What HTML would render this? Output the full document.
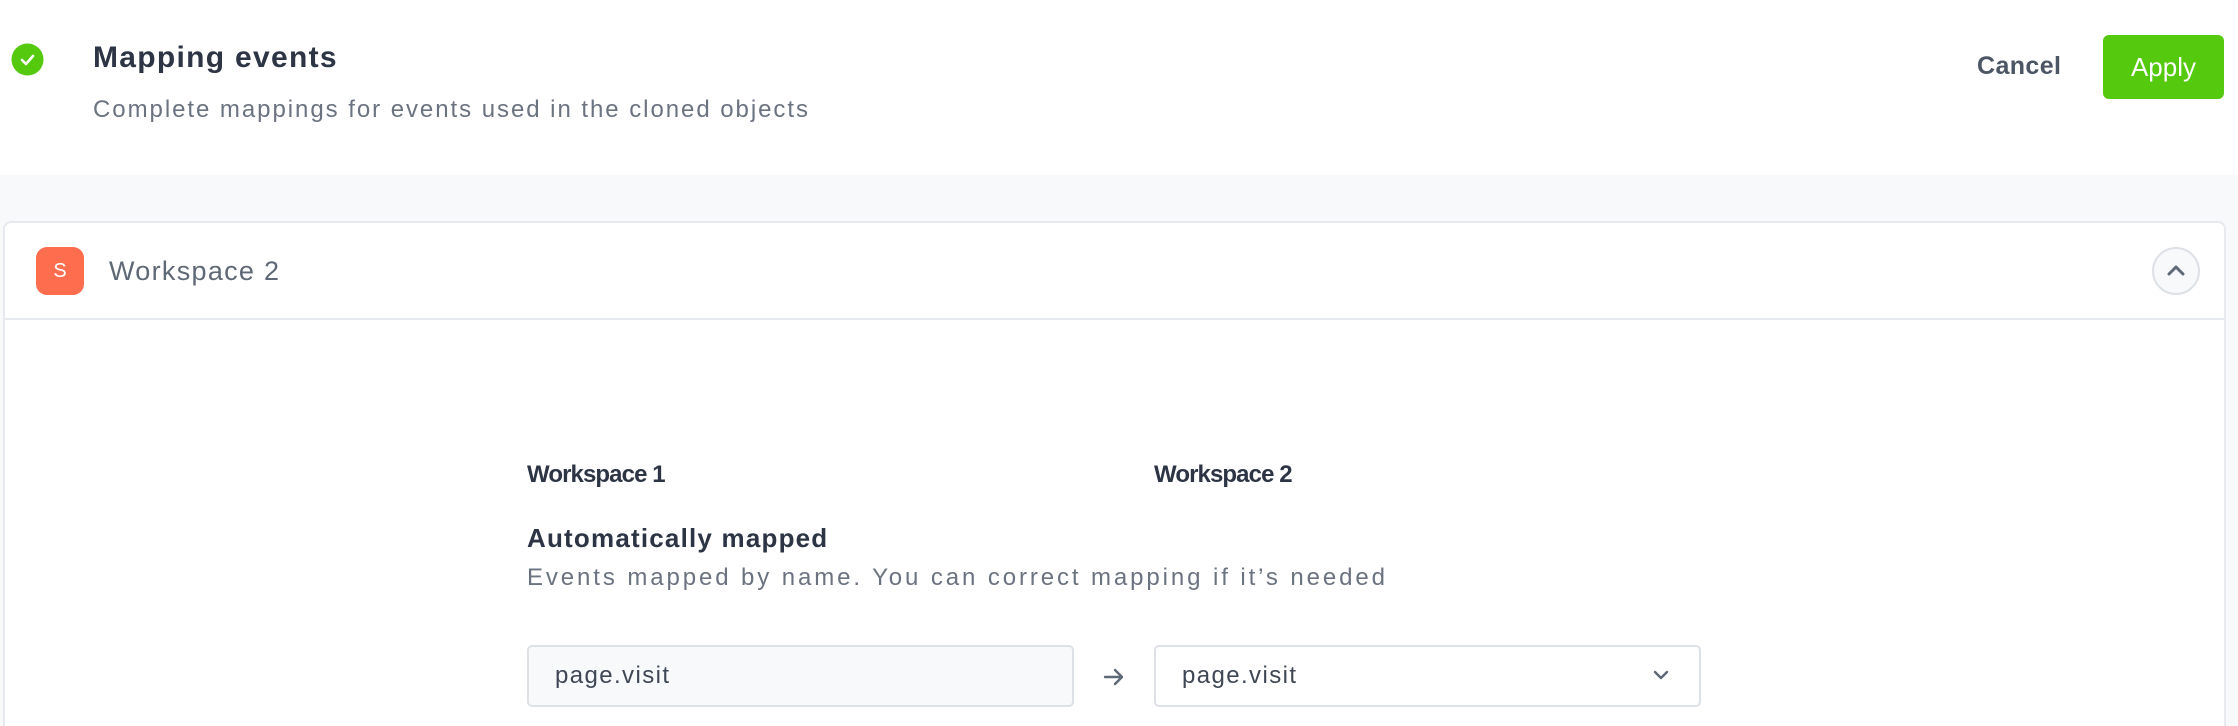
<!DOCTYPE html>
<html style="width:2238px;height:726px;overflow:hidden"><head><meta charset="utf-8"><style>
*{margin:0;padding:0;box-sizing:border-box}
body{width:2238px;height:726px;overflow:hidden;background:#f8f9fb;font-family:"Liberation Sans",sans-serif;position:relative}
.hdr{position:absolute;left:0;top:0;width:2238px;height:175px;background:#fff}
.abs{position:absolute;white-space:nowrap}
.card{position:absolute;left:3px;top:221px;width:2223px;height:505px;background:#fff;border:2px solid #e6e9ed;border-bottom:none;border-radius:8px 8px 0 0}
.line{position:absolute;left:3px;top:318px;width:2223px;height:2px;background:#e6e9ed}
.inp{position:absolute;top:645px;height:62px;width:547px;border:2px solid #dde1e6;border-radius:5px;font-size:24px;color:#3f4754;padding-left:26px;line-height:58px;letter-spacing:1.4px}
</style></head><body>
<div class="hdr"></div>
<svg class="abs" style="left:11px;top:43px" width="33" height="33" viewBox="0 0 33 33"><circle cx="16.5" cy="16.5" r="16" fill="#54c90e"/><path d="M11 17l4 4 7-8" stroke="#fff" stroke-width="2.6" fill="none" stroke-linecap="round" stroke-linejoin="round"/></svg>
<div class="abs" style="left:93px;top:41px;font-size:30px;font-weight:bold;color:#2d3544;letter-spacing:1.3px">Mapping events</div>
<div class="abs" style="left:93px;top:96px;font-size:24px;color:#6b7380;letter-spacing:1.95px">Complete mappings for events used in the cloned objects</div>
<div class="abs" style="left:1977px;top:52px;font-size:25px;font-weight:bold;color:#4b5563;letter-spacing:0.4px">Cancel</div>
<div class="abs" style="left:2103px;top:35px;width:121px;height:64px;background:#54c90e;border-radius:6px;color:#fff;font-size:26px;text-align:center;line-height:64px">Apply</div>
<div class="card"></div>
<div class="line"></div>
<div class="abs" style="left:36px;top:247px;width:48px;height:48px;border-radius:11px;background:#ff6d4f;color:#fff;font-size:20px;text-align:center;line-height:48px">S</div>
<div class="abs" style="left:109px;top:256px;font-size:27px;color:#5f6875;letter-spacing:1.3px">Workspace 2</div>
<div class="abs" style="left:2152px;top:247px;width:48px;height:48px;border-radius:50%;border:2px solid #dde1e6;background:#f8f9fb"></div>
<svg class="abs" style="left:2166px;top:262px" width="20" height="16" viewBox="0 0 20 16"><path d="M3 12l7-7 7 7" stroke="#5f6875" stroke-width="3" fill="none" stroke-linecap="round" stroke-linejoin="round"/></svg>
<div class="abs" style="left:527px;top:461px;font-size:24px;font-weight:bold;color:#2d3544;letter-spacing:-0.9px">Workspace 1</div>
<div class="abs" style="left:1154px;top:461px;font-size:24px;font-weight:bold;color:#2d3544;letter-spacing:-0.9px">Workspace 2</div>
<div class="abs" style="left:527px;top:523px;font-size:26px;font-weight:bold;color:#2d3544;letter-spacing:1.2px">Automatically mapped</div>
<div class="abs" style="left:527px;top:564px;font-size:24px;color:#6b7380;letter-spacing:2.9px">Events mapped by name. You can correct mapping if it’s needed</div>
<div class="inp" style="left:527px;background:#f8f9fb">page.visit</div>
<svg class="abs" style="left:1102px;top:667px" width="24" height="20" viewBox="0 0 24 20"><path d="M3 10h17M13 3l7 7-7 7" stroke="#5f6875" stroke-width="2.4" fill="none" stroke-linecap="round" stroke-linejoin="round"/></svg>
<div class="inp" style="left:1154px;background:#fff">page.visit</div>
<svg class="abs" style="left:1651px;top:668px" width="20" height="14" viewBox="0 0 20 14"><path d="M4 4l6 6 6-6" stroke="#5f6875" stroke-width="2.4" fill="none" stroke-linecap="round" stroke-linejoin="round"/></svg>
</body></html>
